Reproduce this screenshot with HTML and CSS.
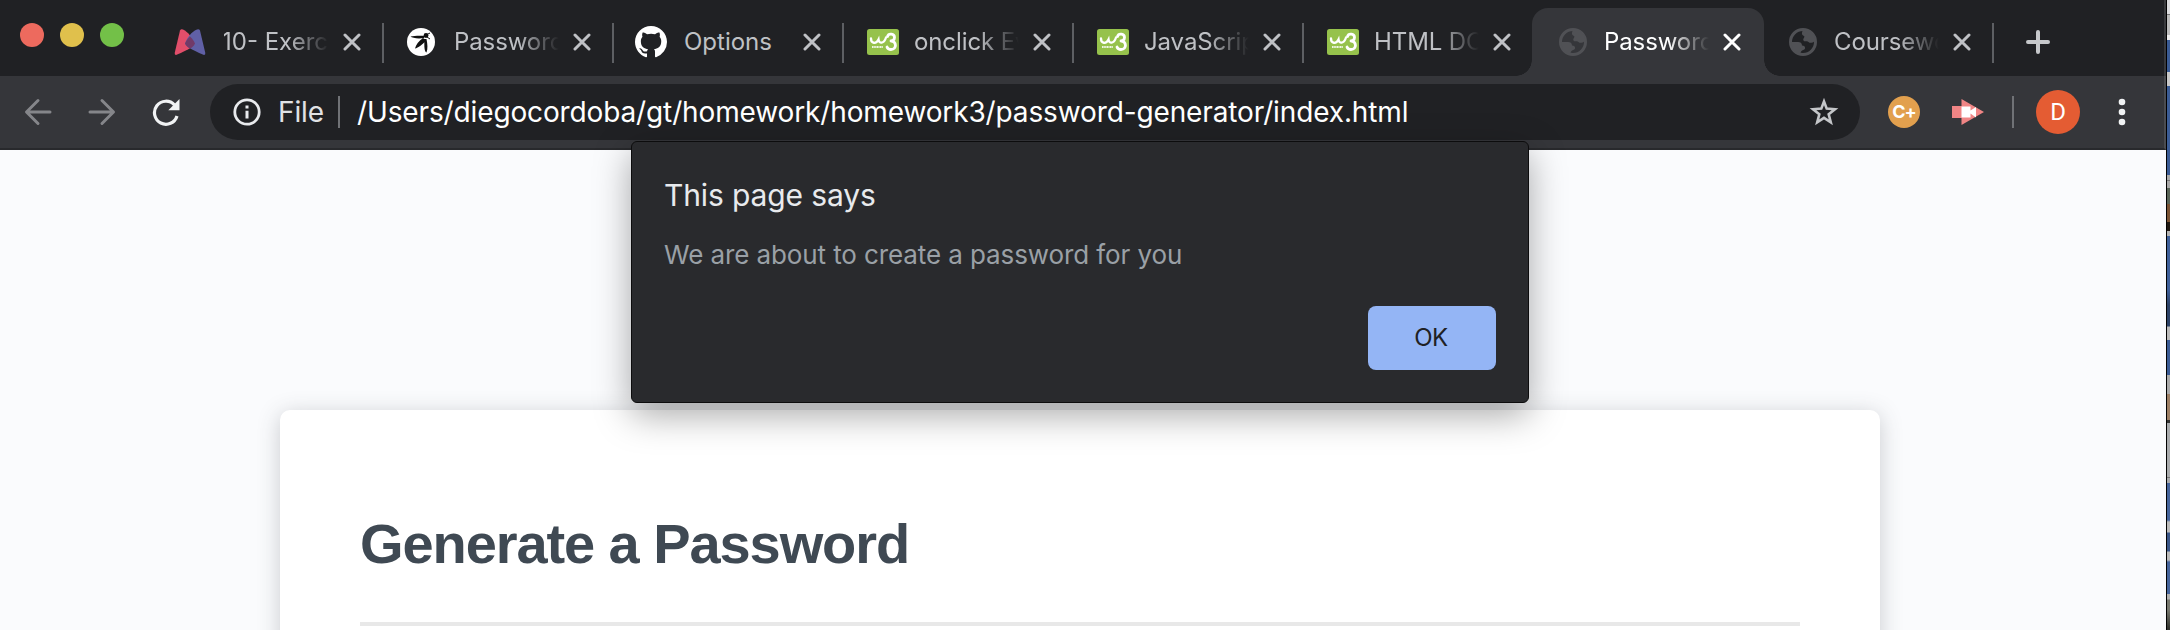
FILE: index.html
```html
<!DOCTYPE html>
<html lang="en">
<head>
<meta charset="utf-8">
<title>Password Generator</title>
<link rel="stylesheet" href="styles.css">
</head>
<body>
<svg width="0" height="0" class="defs">
  <symbol id="close" viewBox="0 0 18 18"><path d="M2 2L16 16M16 2L2 16" stroke="currentColor" stroke-width="3" stroke-linecap="round"/></symbol>
  <symbol id="w3" viewBox="0 0 32 26">
    <rect width="32" height="26" rx="2.5" fill="#96c24c"/>
    <path d="M4 9.500C4 14.500 9 15.500 11.500 10.500C12 15 17 15 19 8.500" fill="none" stroke="#fff" stroke-width="2.300" stroke-linecap="round"/>
    <path d="M20.500 7.500C21.500 4 27.500 4.500 27.500 8.500C27.500 10.800 25.500 12 24 12C29.500 12 30.300 20.500 24 20.500C21.800 20.500 20.500 19.500 20 18" fill="none" stroke="#fff" stroke-width="2.800" stroke-linecap="round" stroke-linejoin="round"/>
    <path d="M5 18H16" stroke="#fff" stroke-width="2" stroke-dasharray="1.200 .4" opacity=".85"/>
  </symbol>
  <symbol id="globe" viewBox="0 0 28 28">
    <circle cx="14" cy="14" r="12.500" fill="var(--land)" stroke="#505155" stroke-width="3"/>
    <path d="M14 2C12.500 5 12.500 7 15 8C16.500 9 13.500 10.500 14.500 12.500C16 14.500 18 12 19.500 14C21 15.500 23 15 26.500 13L25 7L19 2Z" fill="#505155"/>
    <path d="M2 14H9C11.500 14 13 15 13 17.500C15 17.500 16.500 18.500 16 20.500C15.500 22.500 11.500 21.500 11.500 26L4 23Z" fill="#505155"/>
  </symbol>
</svg>
<div class="screen">
  <div class="window">
    <div class="tabstrip">
      <div class="lights"><i class="red"></i><i class="yellow"></i><i class="green"></i></div>
      <div class="tab">
        <span class="fav"><svg class="mlogo" width="32" height="28" viewBox="0 0 32 28"><path d="M6 2.500Q7 .5 9 1.500C14 4 19 10 21 15.500C20 18 16 21 2 27Q.5 27 .7 25Z" fill="#e14e6a"/><path d="M26 2.500Q25 .5 23 1.500C17 4 13 10 11 15.500C12 18 16 21 30 27Q31.500 27 31.300 25Z" fill="#6060a6"/><path d="M16 8.500C18.500 11 20 13 21 15.500C20 18 18 19.500 16 20.500C14 19.500 12 18 11 15.500C12 13 13.500 11 16 8.500Z" fill="#713a68"/></svg></span>
        <span class="label">10- Exerc</span><svg class="x"><use href="#close"/></svg>
      </div>
      <div class="tab">
        <span class="fav"><svg width="30" height="30" viewBox="0 0 30 30"><circle cx="15" cy="15" r="14" fill="#fff"/><g fill="#111"><circle cx="20" cy="8.500" r="2.400"/><path d="M18 11C12 12 6 11 4.500 9.500C8 8.800 14 8.600 19 9ZM17 11L20 13C17 17.500 12 21 9 21.500C10 18 12.500 14 17 11ZM18.500 12L20.500 12C21.500 17 22 22 20.500 25.500C18.500 25 18 20 18.500 12Z"/><path d="M20 8L24 6M21 10L24 12" stroke="#111"/></g></svg></span>
        <span class="label">Password</span><svg class="x"><use href="#close"/></svg>
      </div>
      <div class="tab">
        <span class="fav"><svg width="32" height="32" viewBox="0 0 16 16"><path fill="#fff" d="M8 0C3.580 0 0 3.580 0 8c0 3.540 2.290 6.530 5.470 7.590.4.070.55-.17.55-.38 0-.19-.01-.82-.01-1.490-2.010.37-2.530-.49-2.690-.94-.09-.23-.48-.94-.82-1.130-.28-.15-.68-.52-.01-.53.63-.01 1.080.58 1.230.82.72 1.210 1.870.87 2.330.66.070-.52.28-.87.51-1.070-1.780-.2-3.640-.89-3.640-3.950 0-.87.31-1.590.82-2.150-.08-.2-.36-1.020.08-2.120 0 0 .67-.21 2.200.82.64-.18 1.320-.27 2-.27s1.360.09 2 .27c1.530-1.040 2.200-.82 2.200-.82.44 1.100.16 1.920.08 2.120.51.56.82 1.270.82 2.150 0 3.070-1.870 3.750-3.650 3.950.29.25.54.73.54 1.480 0 1.070-.01 1.930-.01 2.200 0 .21.15.46.55.38A8.010 8.010 0 0 0 16 8c0-4.420-3.580-8-8-8Z"/></svg></span>
        <span class="label full">Options</span><svg class="x"><use href="#close"/></svg>
      </div>
      <div class="tab">
        <span class="fav w3"><svg width="32" height="26"><use href="#w3"/></svg></span>
        <span class="label">onclick Ev</span><svg class="x"><use href="#close"/></svg>
      </div>
      <div class="tab">
        <span class="fav w3"><svg width="32" height="26"><use href="#w3"/></svg></span>
        <span class="label">JavaScrip</span><svg class="x"><use href="#close"/></svg>
      </div>
      <div class="tab plain">
        <span class="fav w3"><svg width="32" height="26"><use href="#w3"/></svg></span>
        <span class="label">HTML DO</span><svg class="x"><use href="#close"/></svg>
      </div>
      <div class="tab active">
        <span class="fav w3"><svg width="28" height="28"><use href="#globe"/></svg></span>
        <span class="label">Password</span><svg class="x"><use href="#close"/></svg>
      </div>
      <div class="tab last">
        <span class="fav w3"><svg width="28" height="28"><use href="#globe"/></svg></span>
        <span class="label">Coursewo</span><svg class="x"><use href="#close"/></svg>
      </div>
      <svg class="plus" width="24" height="24" viewBox="0 0 24 24"><path d="M12 2V22M2 12H22" stroke="#c6c8cb" stroke-width="4" stroke-linecap="round"/></svg>
    </div>
    <div class="toolbar">
      <svg class="back" width="28" height="28" viewBox="0 0 28 28"><path d="M26 14H3M14 2.500L2.500 14L14 25.500" class="arrow"/></svg>
      <svg class="fwd" width="28" height="28" viewBox="0 0 28 28"><path d="M2 14H25M14 2.500L25.500 14L14 25.500" class="arrow"/></svg>
      <svg class="reload" width="28" height="28" viewBox="0 0 28 28"><path d="M22.500 7A11.500 11.500 0 1 0 25 18" fill="none" stroke="#f1f3f4" stroke-width="3.200"/><path d="M27.500 1V12.200H16.300Z" fill="#f1f3f4"/></svg>
      <div class="omnibox">
        <svg class="info" width="28" height="28" viewBox="0 0 28 28"><circle cx="14" cy="14" r="12.200" fill="none" stroke="#e8eaed" stroke-width="2.800"/><path d="M12.500 7.500H15.500V10.500H12.500ZM12.500 12.700H15.500V20.500H12.500Z" fill="#e8eaed"/></svg>
        <span class="scheme">File</span><i class="bar"></i><span class="url">/Users/diegocordoba/gt/homework/homework3/password-generator/index.html</span>
        <svg class="star" width="30" height="30" viewBox="0 0 30 30"><path d="M15 4.500L17.700 11.600L26 12.200L19.700 17.300L21.800 25.300L15 20.900L8.200 25.300L10.300 17.300L4 12.200L12.300 11.600Z" fill="none" stroke="#c4c6c9" stroke-width="2.600"/></svg>
      </div>
      <div class="cplus">C+</div>
      <svg class="cam" width="32" height="26" viewBox="0 0 32 26"><path d="M0 7H9.500V0L32 13L9.500 26V19H0Z" fill="#f08585"/><path d="M9.500 7.500H18.500V11.500L24 8V18.500L18.500 14.500V18.500H9.500Z" fill="#fff"/></svg>
      <i class="bar divider"></i>
      <div class="avatar">D</div>
      <svg class="dots" width="8" height="28" viewBox="0 0 8 28"><g fill="#f1f3f4"><circle cx="4" cy="4" r="3.300"/><circle cx="4" cy="14" r="3.300"/><circle cx="4" cy="24" r="3.300"/></g></svg>
    </div>
    <main class="page">
      <section class="card">
        <h1><span>Generate a Password</span></h1>
      </section>
    </main>
    <div class="dialog">
      <div class="title"><span>This page says</span></div>
      <div class="message"><span>We are about to create a password for you</span></div>
      <button class="ok">OK</button>
    </div>
  </div>
  <div class="desktop"></div>
</div>
</body>
</html>
```
FILE: styles.css
```css
* { box-sizing: border-box; }
body { margin: 0; font-family: Inter, "Noto Sans", sans-serif; overflow: hidden; background: #fafbfd; }
svg { flex: none; display: block; }
.defs { position: absolute; }
.screen { display: flex; width: 2170px; height: 630px; overflow: hidden; }
.window { position: relative; width: 2166px; display: flex; flex-direction: column; flex: none; }
.desktop {
  width: 4px; border-left: 1px solid #000;
  background: linear-gradient(#dcdcde 0 14px, #777 14px 15px, #bbb 15px 35px, #eee 35px 40px, #3b5c95 40px 72px, #c8c8c8 72px 86px, #3b5c95 86px 175px, #aaa 175px 180px, #777 180px 181px, #aaa 181px 188px, #5a6558 188px 204px, #7a5334 204px 222px, #201812 222px 231px, #b4b4b4 231px 236px, #3f609a 236px 290px, #2c4267 305px 326px, #bbb 327px 340px, #3b5c95 340px 375px, #aaa 375px 394px, #9e8066 394px 420px, #333 420px 423px, #a9abad 423px 477px, #777 477px 478px, #a9abad 478px 483px, #46659c 483px 520px, #bbb 522px 532px, #3a5688 533px 551px, #bbb 552px 560px, #46659c 562px 594px, #b0b0b0 594px 599px, #77786f 600px 610px, #33342f 628px);
}

.tabstrip { height: 76px; background: #202124; display: flex; flex: none; border-right: 2px solid #393a3d; }
.lights { width: 153px; padding: 23px 0 0 20px; display: flex; gap: 16px; flex: none; }
.lights i { width: 24px; height: 24px; border-radius: 50%; }
.red { background: #ed6a5e; }
.yellow { background: #e0c04c; }
.green { background: #73c048; }
.tab { --land: #202124; position: relative; width: 230px; height: 68px; margin-top: 8px; padding-left: 22px; display: flex; align-items: center; flex: none; color: #bfc1c5; }
.tab::after { content: ""; position: absolute; right: -1px; top: 15px; width: 2px; height: 40px; background: #5d5f63; }
.fav { width: 32px; display: flex; justify-content: center; flex: none; }
.mlogo { margin-left: -2px; }
.w3 svg { margin-left: 2px; margin-right: -2px; }
.label { width: 119px; margin-left: 17px; white-space: nowrap; font-size: 24px; line-height: 34px; letter-spacing: -.1px; -webkit-mask-image: linear-gradient(90deg, #000 64px, transparent 105px); mask-image: linear-gradient(90deg, #000 64px, transparent 105px); flex: none; }
.full { letter-spacing: 0; -webkit-mask-image: none; mask-image: none; }
.tab:nth-child(2) .label { text-indent: -2px; letter-spacing: 0; }
.x { width: 18px; height: 18px; }
.plain::after { display: none; }
.active { --land: #35363a; width: 232px; margin-left: -1px; padding-left: 23px; background: #35363a; border-radius: 16px 16px 0 0; color: #fff; }
.tab.active::before, .tab.active::after { content: ""; position: absolute; top: 52px; width: 16px; height: 16px; background: radial-gradient(circle at 0 0, transparent 15.500px, #35363a 16px); }
.tab.active::before { left: -16px; }
.tab.active::after { right: -16px; background: radial-gradient(circle at 100% 0, transparent 15.500px, #35363a 16px); }
.last { margin-left: -1px; }
.plus { margin: 22px 0 0 33px; margin-top: 30px; }

.toolbar { height: 74px; background: #35363a; border-bottom: 2px solid #28292c; border-right: 2px solid #4b4c50; display: flex; align-items: center; flex: none; }
.arrow { fill: none; stroke: #85868a; stroke-width: 3; stroke-linecap: round; stroke-linejoin: round; }
.back { margin-left: 24px; }
.fwd { margin-left: 36px; }
.reload { margin-left: 36px; }
.omnibox { width: 1650px; height: 56px; margin-left: 30px; padding: 0 21px 0 23px; border-radius: 28px; background: #202124; display: flex; align-items: center; flex: none; color: #fff; font-size: 28px; white-space: nowrap; }
.info { margin-right: -1px; }
.scheme { margin-left: 18px; width: 60px; color: #e0e2e5; letter-spacing: -.1px; }
.bar { width: 2px; height: 32px; background: #707276; flex: none; }
.url { margin-left: 17px; letter-spacing: -.13px; }
.star { margin-left: auto; }
.cplus { width: 32px; height: 32px; margin-left: 28px; border-radius: 50%; background: #e2a04e; color: #fff; font: bold 18px/31px Inter, sans-serif; letter-spacing: -1px; text-align: center; flex: none; }
.cam { margin-left: 32px; }
.divider { margin-left: 28px; }
.avatar { width: 44px; height: 44px; margin-left: 22px; border-radius: 50%; background: #e45c33; color: #fff; font: 24px/44px Roboto, sans-serif; text-align: center; flex: none; }
.dots { margin-left: 38px; }

.page { height: 480px; padding: 260px 286px 0 280px; background: #fafbfd; overflow: hidden; }
.card { width: 1600px; height: 300px; padding: 80px; border-radius: 10px; background: #fff; box-shadow: 0 4px 22px rgba(60, 64, 70, .25); }
h1 { margin: 0; height: 136px; padding-top: 22px; border-bottom: 4px solid #e8e8e8; font: bold 56px/64px "Liberation Sans", Arial, sans-serif; letter-spacing: -1.080px; color: #3f4953; }

.dialog { position: absolute; left: 631px; top: 141px; width: 898px; height: 262px; padding: 33px 32px 32px 32px; background: #292a2d; border: 1px solid #0c0c0d; border-radius: 6px; box-shadow: 0 12px 36px rgba(0, 0, 0, .34); display: flex; flex-direction: column; }
.title { font-size: 30px; line-height: 40px; letter-spacing: -.12px; color: #e8eaed; }
.message { margin-top: 22px; font-size: 26px; line-height: 36px; letter-spacing: -.1px; color: #9aa0a6; }
.ok { margin-top: auto; align-self: flex-end; width: 128px; height: 64px; padding: 0 2px 2px 0; border: 0; border-radius: 8px; background: #94b5f5; color: #202124; font: 24px Inter, sans-serif; letter-spacing: -.4px; }
```
